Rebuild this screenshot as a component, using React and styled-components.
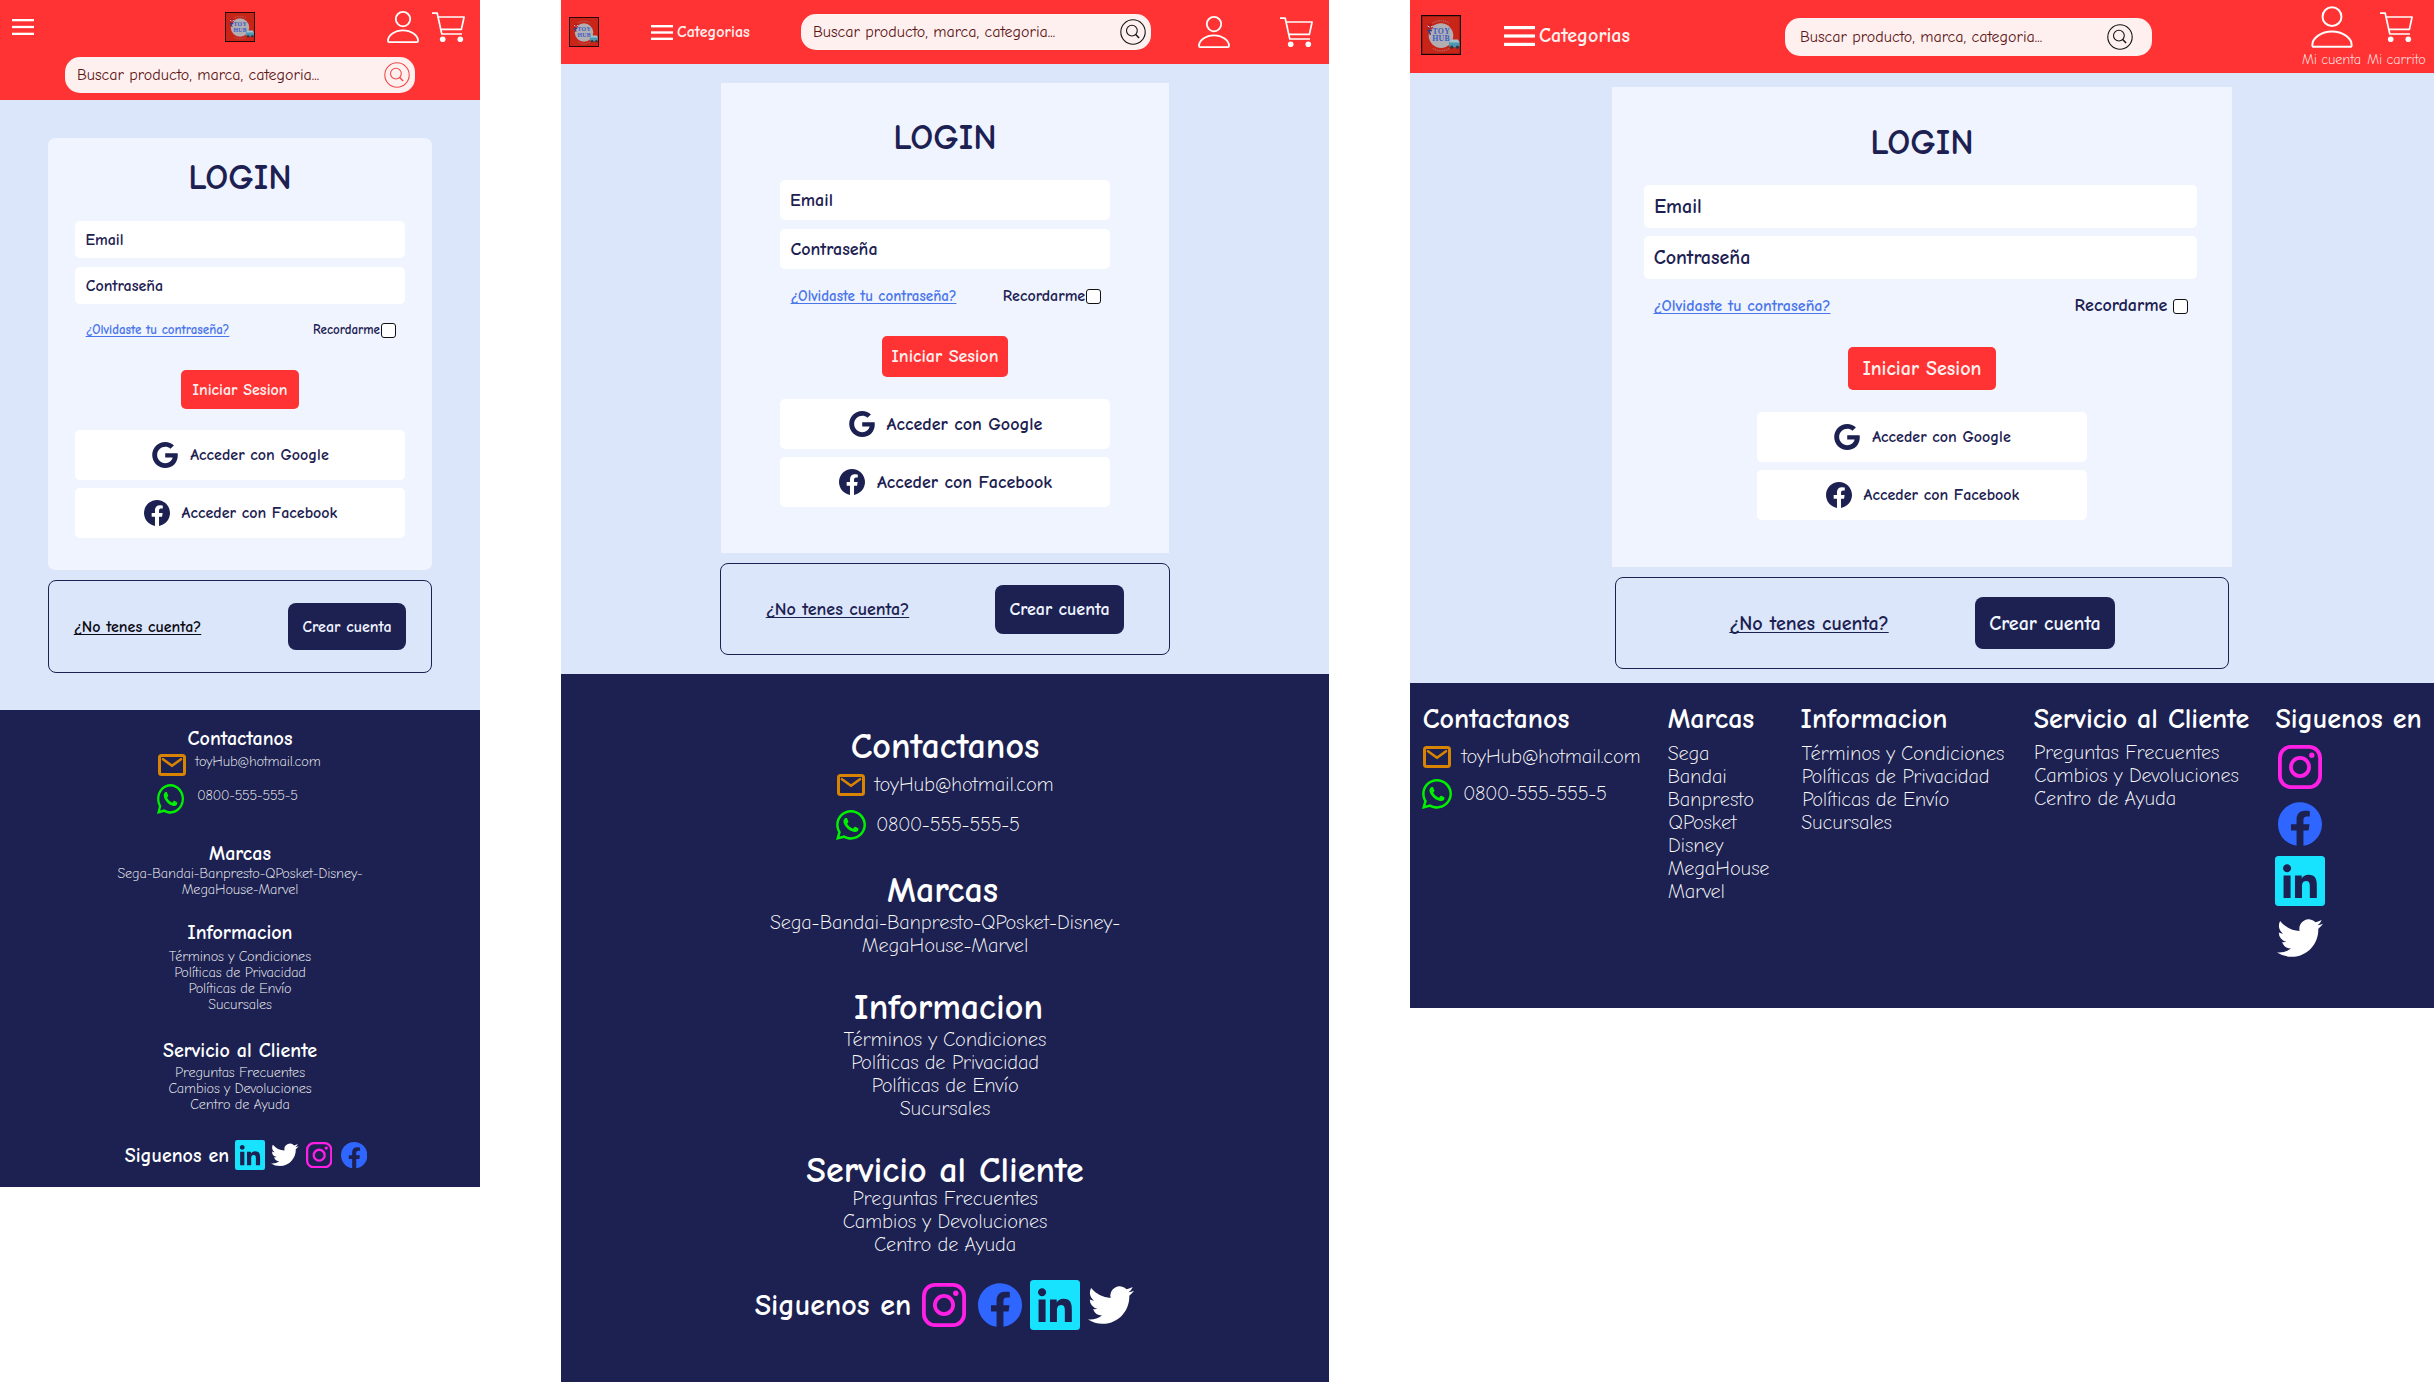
import React from "react";
import styled, { createGlobalStyle, css } from "styled-components";
import { FaGoogle, FaWhatsapp } from "react-icons/fa";

const navy = "#1c2151";
const red = "#ff3333";

const GlobalStyle = createGlobalStyle`
  * { box-sizing: border-box; }
  body {
    margin: 0;
    background: #fff;
    font-family: "Comic Neue", Lato, "Open Sans", sans-serif;
  }
  svg { display: block; flex: none; }
  h1, h2, p, ul, li { margin: 0; padding: 0; list-style: none; font: inherit; }
  button { font: inherit; border: 0; padding: 0; cursor: pointer; }
`;

/* ---------- text ---------- */

const Text = styled.span.attrs((p) => ({ $weight: p.$weight || 700, $color: p.$color || navy }))`
  display: flex;
  justify-content: center;
  flex: none;
  width: ${(p) => p.$w}px;
  white-space: nowrap;
  font-size: ${(p) => p.$size}px;
  font-weight: ${(p) => p.$weight};
  letter-spacing: ${(p) => (p.$weight === 300 ? "-0.01em" : "normal")};
  color: ${(p) => p.$color};
  ${(p) => p.$underline && css`
    text-decoration: underline;
    text-decoration-thickness: 1px;
    text-decoration-skip-ink: none;
    text-underline-offset: 2px;
  `}
`;

/* ---------- icons ---------- */

const MenuIcon = ({ w, h, bar }) => (
  <svg width={w} height={h} fill="#fff">
    <rect width={w} height={bar} />
    <rect y={(h - bar) / 2} width={w} height={bar} />
    <rect y={h - bar} width={w} height={bar} />
  </svg>
);

const UserIcon = ({ size = 32 }) => (
  <svg width={size} height={size} viewBox="0 0 32 32" fill="none" stroke="#fff" strokeWidth={size > 32 ? 1.5 : 1.8}>
    <circle cx="16" cy="8.1" r="7.2" />
    <path d="M2.2 31.1h27.6c.7 0 1.2-.5 1.2-1.2C31 24.4 24.2 19.4 16 19.4S1 24.4 1 29.9c0 .7.5 1.2 1.2 1.2z" />
  </svg>
);

const CartIcon = () => (
  <svg width="33" height="30" viewBox="0 0 33 30" fill="none" stroke="#fff" strokeWidth="1.7" strokeLinejoin="round">
    <path d="M0 1.2h5.2L9.8 22H30M6.2 5h25.9l-2.7 12.3H8.7" />
    <g fill="#fff" stroke="none"><circle cx="10.7" cy="27.2" r="2.8" /><circle cx="28.3" cy="27.2" r="2.8" /></g>
  </svg>
);

const SearchIcon = ({ color }) => (
  <svg width="26" height="26" viewBox="0 0 26 26" fill="none" stroke={color} strokeWidth="1.1">
    <circle cx="13" cy="13" r="12.2" />
    <circle cx="11.9" cy="11.6" r="5.4" />
    <path d="M15.7 15.5l3.4 3.6" strokeWidth="1.5" />
  </svg>
);

const Logo = ({ size = 30 }) => (
  <svg width={size} height={size} viewBox="0 0 40 40">
    <rect x=".6" y=".6" width="38.8" height="38.8" fill="#c82418" stroke="#140505" strokeWidth="1.2" />
    <path d="M11.5 8.3a15 15 0 0 1 17 0M12 33.5a15 15 0 0 0 16 0" fill="none" stroke="#b0665f" strokeWidth="1.3" strokeDasharray="1.4 .8" />
    <circle cx="20" cy="20.6" r="12.3" fill="#b1adb2" />
    <g fill="#3a5cc4" fontFamily="'Liberation Serif', serif" fontWeight="700" fontSize="7.8" letterSpacing=".35">
      <text x="11.4" y="19">TOY</text>
      <text x="11.2" y="26.4">HUB</text>
    </g>
    <circle cx="9" cy="11.6" r="3" fill="#b01c22" />
    <path d="M6.6 11l2 1.2M10 12.2l1.8-1.2" stroke="#eef" strokeWidth="1" />
    <path d="M6.5 15.5h4.5M8 16l1.5 3.8" stroke="#2b3f8a" strokeWidth="1.5" />
    <rect x="28" y="26" width="10.6" height="6.2" rx="1.6" fill="#4d97b0" />
    <path d="M29.5 24.6h7.5l1.4 2.8H28.6z" fill="#9fc4cb" />
    <circle cx="30.8" cy="32.2" r="1.6" fill="#2b3c48" />
    <circle cx="36.4" cy="32.2" r="1.6" fill="#2b3c48" />
  </svg>
);

const MailIcon = () => (
  <svg width="28" height="22" viewBox="0 0 28 22" fill="none" stroke="#d98400" strokeWidth="3" strokeLinejoin="round">
    <rect x="1.5" y="1.5" width="25" height="19" rx="2" />
    <path d="M5 5.2l9 6.6 9-6.6" strokeLinecap="round" strokeWidth="2.6" />
  </svg>
);

const FacebookIcon = ({ size, color }) => (
  <svg width={size} height={size} viewBox="0 0 24 24" fill={color}>
    <path d="M24 12.073c0-6.627-5.373-12-12-12s-12 5.373-12 12c0 5.99 4.388 10.954 10.125 11.854v-8.385H7.078v-3.47h3.047V9.43c0-3.007 1.792-4.669 4.533-4.669 1.312 0 2.686.235 2.686.235v2.953H15.83c-1.491 0-1.956.925-1.956 1.874v2.25h3.328l-.532 3.47h-2.796v8.385C19.612 23.027 24 18.062 24 12.073z" />
  </svg>
);

const InstagramIcon = ({ size }) => (
  <svg width={size} height={size} viewBox="0 0 44 44" fill="none" stroke="#ff1fe5" strokeWidth="3.8">
    <rect x="1.9" y="1.9" width="40.2" height="40.2" rx="11" />
    <circle cx="22" cy="22" r="9.1" />
    <circle cx="33.8" cy="10.2" r="2.7" fill="#ff1fe5" stroke="none" />
  </svg>
);

const LinkedinIcon = ({ size }) => (
  <svg width={size} height={size} viewBox="0 0 24 24">
    <rect width="24" height="24" rx="1.7" fill="#18e3ff" />
    <path
      fill={navy}
      transform="translate(.75 .8) scale(.945)"
      d="M20.447 20.452h-3.554v-5.569c0-1.328-.027-3.037-1.852-3.037-1.853 0-2.136 1.445-2.136 2.939v5.667H9.351V9h3.414v1.561h.046c.477-.9 1.637-1.85 3.37-1.85 3.601 0 4.267 2.37 4.267 5.455v6.286zM5.337 7.433c-1.144 0-2.063-.926-2.063-2.065 0-1.138.92-2.063 2.063-2.063 1.14 0 2.064.925 2.064 2.063 0 1.139-.925 2.065-2.064 2.065zm1.782 13.019H3.555V9h3.564v11.452z"
    />
  </svg>
);

const TwitterIcon = ({ size }) => (
  <svg width={size} height={size} viewBox="0 0 24 24" fill="#fff">
    <path d="M23.953 4.57a10 10 0 01-2.825.775 4.958 4.958 0 002.163-2.723c-.951.555-2.005.959-3.127 1.184a4.92 4.92 0 00-8.384 4.482C7.69 8.095 4.067 6.13 1.64 3.162a4.822 4.822 0 00-.666 2.475c0 1.71.87 3.213 2.188 4.096a4.904 4.904 0 01-2.228-.616v.06a4.923 4.923 0 003.946 4.827 4.996 4.996 0 01-2.212.085 4.936 4.936 0 004.604 3.417 9.867 9.867 0 01-6.102 2.105c-.39 0-.779-.023-1.17-.067a13.995 13.995 0 007.557 2.209c9.053 0 13.998-7.496 13.998-13.985 0-.21 0-.42-.015-.63A9.935 9.935 0 0024 4.59z" />
  </svg>
);

/* ---------- page ---------- */

const Board = styled.main`
  display: flex;
  align-items: flex-start;
  gap: 81px;
  width: 2434px;
  height: 1382px;
  overflow: hidden;
`;

const Screen = styled.section`
  flex: none;
  width: ${(p) => p.$w}px;
`;

/* ---------- header ---------- */

const Header = styled.header`
  display: flex;
  align-items: center;
  height: ${(p) => p.$h}px;
  background: ${red};
`;

const StackedHeader = styled(Header)`
  flex-direction: column;
`;

const TopRow = styled.div`
  display: grid;
  grid-template-columns: 1fr auto 1fr;
  align-items: center;
  width: 100%;
  height: 54px;
  padding: 0 15px 0 12px;
  margin-bottom: 3px;
`;

const LogoCell = styled.div`
  padding-left: 3px;
`;

const Actions = styled.div`
  display: flex;
  justify-content: flex-end;
  align-items: center;
  gap: 13px;
`;

const Slot = styled.div`
  display: flex;
  align-items: center;
  gap: 4px;
  margin-left: ${(p) => p.$left}px;
  padding-bottom: ${(p) => p.$lift || 0}px;
`;

const Account = styled.div`
  align-self: stretch;
  display: flex;
  flex-direction: column;
  align-items: center;
  margin-left: ${(p) => p.$left}px;
  line-height: 16px;
`;

const AccountIcon = styled.div`
  display: flex;
  align-items: center;
  height: 42px;
  margin: 6px 0 4px;
`;

const SearchBar = styled.div`
  display: flex;
  align-items: center;
  justify-content: space-between;
  flex: none;
  width: ${(p) => p.$w}px;
  height: ${(p) => p.$h}px;
  padding: 0 ${(p) => p.$right}px 0 ${(p) => p.$left}px;
  border-radius: 15px;
  background: #fff0f0;
`;

const Search = ({ w = 350, h = 36, left = 12, right = 5, color = "#151515" }) => (
  <SearchBar $w={w} $h={h} $left={left} $right={right}>
    <Text $w={242} $size={16} $weight={400} $color="#5c1616">Buscar producto, marca, categoria...</Text>
    <SearchIcon color={color} />
  </SearchBar>
);

/* ---------- login ---------- */

const Body = styled.div`
  display: flex;
  flex-direction: column;
  align-items: center;
  height: 610px;
  padding-top: ${(p) => p.$top}px;
  background: #dce6fb;
`;

const Card = styled.form`
  display: flex;
  flex-direction: column;
  align-items: center;
  width: ${(p) => p.$w}px;
  height: ${(p) => p.$h}px;
  padding-top: ${(p) => p.$top}px;
  border-radius: ${(p) => p.$radius}px;
  background: #f0f4ff;
`;

const Title = styled.h1`
  line-height: 42px;
`;

const Fields = styled.div`
  display: grid;
  gap: ${(p) => p.$gap}px;
  width: ${(p) => p.$w}px;
  margin: ${(p) => p.$top}px ${(p) => p.$shift}px 0 0;
`;

const Field = styled.div`
  display: flex;
  align-items: center;
  height: ${(p) => p.$h}px;
  padding-left: ${(p) => p.$pad}px;
  border-radius: 5px;
  background: #fff;
`;

const Options = styled.div`
  display: flex;
  justify-content: space-between;
  align-items: center;
  width: ${(p) => p.$w}px;
  height: 20px;
  margin: ${(p) => p.$top}px ${(p) => p.$shift}px 0 0;
  padding: 0 9px 0 ${(p) => p.$pad}px;
  line-height: 20px;
`;

const Remember = styled.label`
  display: flex;
  align-items: center;
  gap: ${(p) => p.$gap}px;
`;

const Checkbox = styled.span`
  width: 15px;
  height: 15px;
  border: 1px solid #111;
  border-radius: 3px;
  background: #fff;
`;

const Submit = styled.button`
  display: grid;
  place-items: center;
  width: ${(p) => p.$w}px;
  height: ${(p) => p.$h}px;
  margin-top: ${(p) => p.$top}px;
  border-radius: 5px;
  background: ${red};
`;

const Providers = styled.div`
  display: grid;
  gap: 8px;
  margin-top: ${(p) => p.$top}px;
`;

const Provider = styled.button`
  display: flex;
  justify-content: center;
  align-items: center;
  gap: 12px;
  width: 330px;
  height: 50px;
  padding-left: 1px;
  border-radius: 5px;
  color: ${navy};
  background: #fff;
`;

const Register = styled.div`
  display: flex;
  justify-content: space-between;
  align-items: center;
  width: ${(p) => p.$w}px;
  height: ${(p) => p.$h}px;
  margin-top: 10px;
  padding: 0 ${(p) => p.$pad}px;
  border: 1px solid ${navy};
  border-radius: 8px;
`;

const RegisterButton = styled.button`
  display: grid;
  place-items: center;
  width: ${(p) => p.$w}px;
  height: ${(p) => p.$h}px;
  border-radius: 8px;
  background: ${navy};
`;

function Login({ c }) {
  return (
    <Body $top={c.bodyTop}>
      <Card $w={c.card[0]} $h={c.card[1]} $top={c.card[2]} $radius={c.radius}>
        <Title><Text $w={100} $size={36}>LOGIN</Text></Title>
        <Fields $w={c.fieldW} $gap={c.fieldGap} $top={c.fieldTop} $shift={c.shift}>
          <Field $h={c.fieldH} $pad={c.pad}><Text $w={c.email} $size={c.size}>Email</Text></Field>
          <Field $h={c.fieldH} $pad={c.pad}><Text $w={c.password} $size={c.size}>Contraseña</Text></Field>
        </Fields>
        <Options $w={c.fieldW} $top={c.optTop} $shift={c.shift} $pad={c.pad}>
          <Text $w={c.forgot[0]} $size={c.forgot[1]} $color="#4a76ea" $underline>¿Olvidaste tu contraseña?</Text>
          <Remember $gap={c.rememberGap}>
            <Text $w={c.remember[0]} $size={c.remember[1]}>Recordarme</Text>
            <Checkbox />
          </Remember>
        </Options>
        <Submit type="button" $w={c.submit[0]} $h={c.submit[1]} $top={c.submit[2]}>
          <Text $w={c.submit[3]} $size={c.size} $color="#fff0f0">Iniciar Sesion</Text>
        </Submit>
        <Providers $top={c.provTop}>
          <Provider type="button">
            <FaGoogle viewBox="0 8 488 496" size={26} />
            <Text $w={c.google} $size={c.provSize}>Acceder con Google</Text>
          </Provider>
          <Provider type="button">
            <FacebookIcon size={26} color={navy} />
            <Text $w={c.facebook} $size={c.provSize}>Acceder con Facebook</Text>
          </Provider>
        </Providers>
      </Card>
      <Register $w={c.reg[0]} $h={c.reg[1]} $pad={c.reg[2]}>
        <Text $w={c.noAccount[0]} $size={c.size} $color={c.noAccount[1]} $underline>¿No tenes cuenta?</Text>
        <RegisterButton $w={c.create[0]} $h={c.create[1]}>
          <Text $w={c.create[2]} $size={c.size} $color="#f0f4ff">Crear cuenta</Text>
        </RegisterButton>
      </Register>
    </Body>
  );
}

/* ---------- footer ---------- */

const Footer = styled.footer`
  display: flex;
  flex-direction: column;
  align-items: center;
  height: ${(p) => p.$h}px;
  padding-top: ${(p) => p.$top}px;
  background: ${navy};
`;

const ColumnsFooter = styled.footer`
  display: grid;
  grid-template-columns: 246px 133px 233px 241px 1fr;
  height: 325px;
  padding: 21px 0 0 12px;
  background: ${navy};
`;

const Heading = styled.h2`
  margin-top: ${(p) => p.$top || 0}px;
  padding-left: ${(p) => p.$left || 0}px;
  padding-right: ${(p) => p.$right || 0}px;
  line-height: ${(p) => p.$lh}px;
`;

const ColumnHeading = styled(Heading)`
  display: flex;
`;

const List = styled.ul`
  display: flex;
  flex-direction: column;
  align-items: ${(p) => p.$align || "center"};
  margin-top: ${(p) => p.$top}px;
  line-height: ${(p) => p.$lh}px;
`;

const ContactRow = styled.div`
  display: flex;
  align-items: center;
  gap: ${(p) => p.$gap}px;
  width: ${(p) => p.$w}px;
  height: ${(p) => p.$h}px;
  margin-top: ${(p) => p.$top}px;
  line-height: 20px;
`;

const ContactIcon = styled.div`
  display: flex;
  justify-content: ${(p) => p.$justify || "center"};
  width: 30px;
`;

const WhatsappIcon = styled(FaWhatsapp).attrs({ viewBox: "0 32 448 448", preserveAspectRatio: "none" })`
  width: ${(p) => p.$w}px;
  height: 30px;
  color: #00f000;
`;

const ContactText = styled.div`
  margin-bottom: ${(p) => p.$lift || 0}px;
`;

const Social = styled.div`
  display: flex;
  align-items: center;
  margin-top: ${(p) => p.$top}px;
  padding-left: ${(p) => p.$left || 0}px;
`;

const SocialStack = styled.div`
  display: grid;
  gap: 7px;
  margin-top: 8px;
`;

const IconBox = styled.div`
  display: grid;
  place-items: center;
  width: ${(p) => p.$size}px;
  height: ${(p) => p.$size}px;
  margin-left: ${(p) => p.$left || 0}px;
`;

const Lines = ({ items, size, ...rest }) => (
  <List {...rest}>
    {items.map(([label, w]) => (
      <li key={label}><Text $w={w} $size={size} $weight={300} $color="#fff">{label}</Text></li>
    ))}
  </List>
);

const Contact = ({ w, gap, tops, lift, size, mailW, phoneW, waW = 30 }) => (
  <>
    <ContactRow $w={w} $gap={gap} $h={24} $top={tops[0]}>
      <ContactIcon><MailIcon /></ContactIcon>
      <ContactText $lift={lift}><Text $w={mailW} $size={size} $weight={300} $color="#fff">toyHub@hotmail.com</Text></ContactText>
    </ContactRow>
    <ContactRow $w={w} $gap={gap + 1} $h={30} $top={tops[1]}>
      <ContactIcon $justify="flex-start"><WhatsappIcon $w={waW} /></ContactIcon>
      <ContactText $lift={lift}><Text $w={phoneW} $size={size} $weight={300} $color="#fff">0800-555-555-5</Text></ContactText>
    </ContactRow>
  </>
);

const socialIcons = {
  instagram: (s) => <InstagramIcon size={s * 0.88} />,
  facebook: (s) => <FacebookIcon size={s * 0.88} color="#2f66ff" />,
  linkedin: (s) => <LinkedinIcon size={s} />,
  twitter: (s) => <TwitterIcon size={s * 0.92} />,
};

function StackedFooter({ f }) {
  const heading = (label, w, top, left, right) => (
    <Heading $lh={f.headLh} $top={top} $left={left} $right={right}>
      <Text $w={w} $size={f.head} $color="#fff">{label}</Text>
    </Heading>
  );
  return (
    <Footer $h={f.h} $top={f.top}>
      {heading("Contactanos", f.w.contact, 0)}
      <Contact {...f.contact} />
      {heading("Marcas", f.w.brands, f.tops[0], 0, f.brandsShift)}
      <Lines items={f.brands} size={f.size} $lh={f.lh} $top={f.tops[1]} />
      {heading("Informacion", f.w.info, f.tops[2], f.infoShift)}
      <Lines items={f.info} size={f.size} $lh={f.lh} $top={f.tops[3]} />
      {heading("Servicio al Cliente", f.w.service, f.tops[4])}
      <Lines items={f.service} size={f.size} $lh={f.lh} $top={f.tops[5]} />
      <Social $top={f.tops[6]} $left={f.socialLeft}>
        <Text $w={f.w.follow} $size={f.follow} $color="#fff">Siguenos en</Text>
        {f.social.map(([name, left]) => (
          <IconBox key={name} $size={f.icon} $left={left}>{socialIcons[name](f.icon)}</IconBox>
        ))}
      </Social>
    </Footer>
  );
}

/* ---------- screen settings ---------- */

const mobile = {
  bodyTop: 38, card: [384, 432, 19], radius: 7, size: 16,
  fieldW: 330, fieldGap: 9, fieldTop: 22, fieldH: 37, pad: 11, shift: 0,
  email: 37, password: 77,
  optTop: 16, forgot: [143, 13], remember: [67, 13], rememberGap: 1,
  submit: [118, 39, 30, 94], provTop: 21, google: 139, facebook: 156, provSize: 16,
  reg: [384, 93, 25], noAccount: [127, "#0b0b14"], create: [118, 47, 88],
};

const tablet = {
  bodyTop: 19, card: [448, 470, 34], radius: 0, size: 18,
  fieldW: 330, fieldGap: 9, fieldTop: 21, fieldH: 40, pad: 11, shift: 0,
  email: 41, password: 86,
  optTop: 17, forgot: [165, 15], remember: [82, 16], rememberGap: 1,
  submit: [126, 41, 30, 106], provTop: 22, google: 156, facebook: 175, provSize: 18,
  reg: [450, 92, 45], noAccount: [143, navy], create: [129, 49, 99],
};

const desktop = {
  bodyTop: 14, card: [620, 480, 35], radius: 0, size: 20,
  fieldW: 553, fieldGap: 8, fieldTop: 21, fieldH: 43, pad: 10, shift: 3,
  email: 48, password: 96,
  optTop: 17, forgot: [176, 16], remember: [92, 18], rememberGap: 6,
  submit: [148, 43, 31, 118], provTop: 22, google: 139, facebook: 156, provSize: 16,
  reg: [614, 92, 113], noAccount: [160, navy], create: [140, 52, 111],
};

const mobileFooter = {
  h: 477, top: 18, head: 20, headLh: 22, size: 14, lh: 16, icon: 30, follow: 20,
  w: { contact: 105, brands: 62, info: 105, service: 154, follow: 104 },
  contact: { w: 166, gap: 8, tops: [3, 7], lift: 7, size: 14, mailW: 126, phoneW: 103, waW: 27 },
  tops: [29, 1, 24, 5, 27, 3, 27],
  brands: [["Sega-Bandai-Banpresto-QPosket-Disney-", 245], ["MegaHouse-Marvel", 117]],
  info: [["Términos y Condiciones", 142], ["Políticas de Privacidad", 132], ["Políticas de Envío", 104], ["Sucursales", 64]],
  service: [["Preguntas Frecuentes", 130], ["Cambios y Devoluciones", 144], ["Centro de Ayuda", 100]],
  social: [["linkedin", 6], ["twitter", 5], ["instagram", 4], ["facebook", 5]],
  socialLeft: 14,
};

const tabletFooter = {
  h: 708, top: 53, head: 36, headLh: 40, size: 20, lh: 23, icon: 50, follow: 30,
  w: { contact: 187, brands: 109, info: 187, service: 277, follow: 156 },
  contact: { w: 218, gap: 8, tops: [6, 13], lift: 0, size: 20, mailW: 180, phoneW: 146 },
  tops: [31, 0, 31, 0, 31, -4, 24],
  brandsShift: 5, infoShift: 7,
  brands: [["Sega-Bandai-Banpresto-QPosket-Disney-", 350], ["MegaHouse-Marvel", 167]],
  info: [["Términos y Condiciones", 204], ["Políticas de Privacidad", 189], ["Políticas de Envío", 149], ["Sucursales", 91]],
  service: [["Preguntas Frecuentes", 185], ["Cambios y Devoluciones", 205], ["Centro de Ayuda", 142]],
  social: [["instagram", 8], ["facebook", 6], ["linkedin", 5], ["twitter", 6]],
  socialLeft: 1,
};

const brandColumn = [["Sega", 41], ["Bandai", 58], ["Banpresto", 85], ["QPosket", 69], ["Disney", 55], ["MegaHouse", 101], ["Marvel", 57]];

export default function App() {
  return (
    <>
      <GlobalStyle />
      <Board>
        <Screen $w={480}>
          <StackedHeader $h={100}>
            <TopRow>
              <MenuIcon w={22} h={16} bar={2.3} />
              <LogoCell><Logo /></LogoCell>
              <Actions><UserIcon /><CartIcon /></Actions>
            </TopRow>
            <Search color="#f24a4a" />
          </StackedHeader>
          <Login c={mobile} />
          <StackedFooter f={mobileFooter} />
        </Screen>

        <Screen $w={768}>
          <Header $h={64}>
            <Slot $left={8}><Logo /></Slot>
            <Slot $left={52}>
              <MenuIcon w={22} h={15} bar={2.4} />
              <Text $w={73} $size={16} $color="#fff0f0">Categorias</Text>
            </Slot>
            <Slot $left={51}><Search /></Slot>
            <Slot $left={47}><UserIcon /></Slot>
            <Slot $left={50}><CartIcon /></Slot>
          </Header>
          <Login c={tablet} />
          <StackedFooter f={tabletFooter} />
        </Screen>

        <Screen $w={1024}>
          <Header $h={73}>
            <Slot $left={11} $lift={3}><Logo size={40} /></Slot>
            <Slot $left={43} $lift={2}>
              <MenuIcon w={31} h={20} bar={3.2} />
              <Text $w={91} $size={20} $color="#fff0f0">Categorias</Text>
            </Slot>
            <Slot $left={155}><Search w={367} h={38} left={15} right={19} /></Slot>
            <Account $left={150}>
              <AccountIcon><UserIcon size={42} /></AccountIcon>
              <Text $w={59} $size={14} $weight={300} $color="#fff">Mi cuenta</Text>
            </Account>
            <Account $left={6}>
              <AccountIcon><CartIcon /></AccountIcon>
              <Text $w={59} $size={14} $weight={300} $color="#fff">Mi carrito</Text>
            </Account>
          </Header>
          <Login c={desktop} />
          <ColumnsFooter>
            <div>
              <ColumnHeading $lh={30} $left={1}><Text $w={146} $size={28} $color="#fff">Contactanos</Text></ColumnHeading>
              <Contact w={230} gap={9} tops={[11, 10]} size={20} mailW={180} phoneW={146} />
            </div>
            <div>
              <ColumnHeading $lh={30}><Text $w={86} $size={28} $color="#fff">Marcas</Text></ColumnHeading>
              <Lines items={brandColumn} size={20} $lh={23} $top={8} $align="flex-start" />
            </div>
            <div>
              <ColumnHeading $lh={30}><Text $w={146} $size={28} $color="#fff">Informacion</Text></ColumnHeading>
              <Lines items={tabletFooter.info} size={20} $lh={23} $top={8} $align="flex-start" />
            </div>
            <div>
              <ColumnHeading $lh={30}><Text $w={215} $size={28} $color="#fff">Servicio al Cliente</Text></ColumnHeading>
              <Lines items={tabletFooter.service} size={20} $lh={23} $top={7} $align="flex-start" />
            </div>
            <div>
              <ColumnHeading $lh={30} $left={1}><Text $w={145} $size={28} $color="#fff">Siguenos en</Text></ColumnHeading>
              <SocialStack>
                {["instagram", "facebook", "linkedin", "twitter"].map((name) => (
                  <IconBox key={name} $size={50}>{socialIcons[name](50)}</IconBox>
                ))}
              </SocialStack>
            </div>
          </ColumnsFooter>
        </Screen>
      </Board>
    </>
  );
}
